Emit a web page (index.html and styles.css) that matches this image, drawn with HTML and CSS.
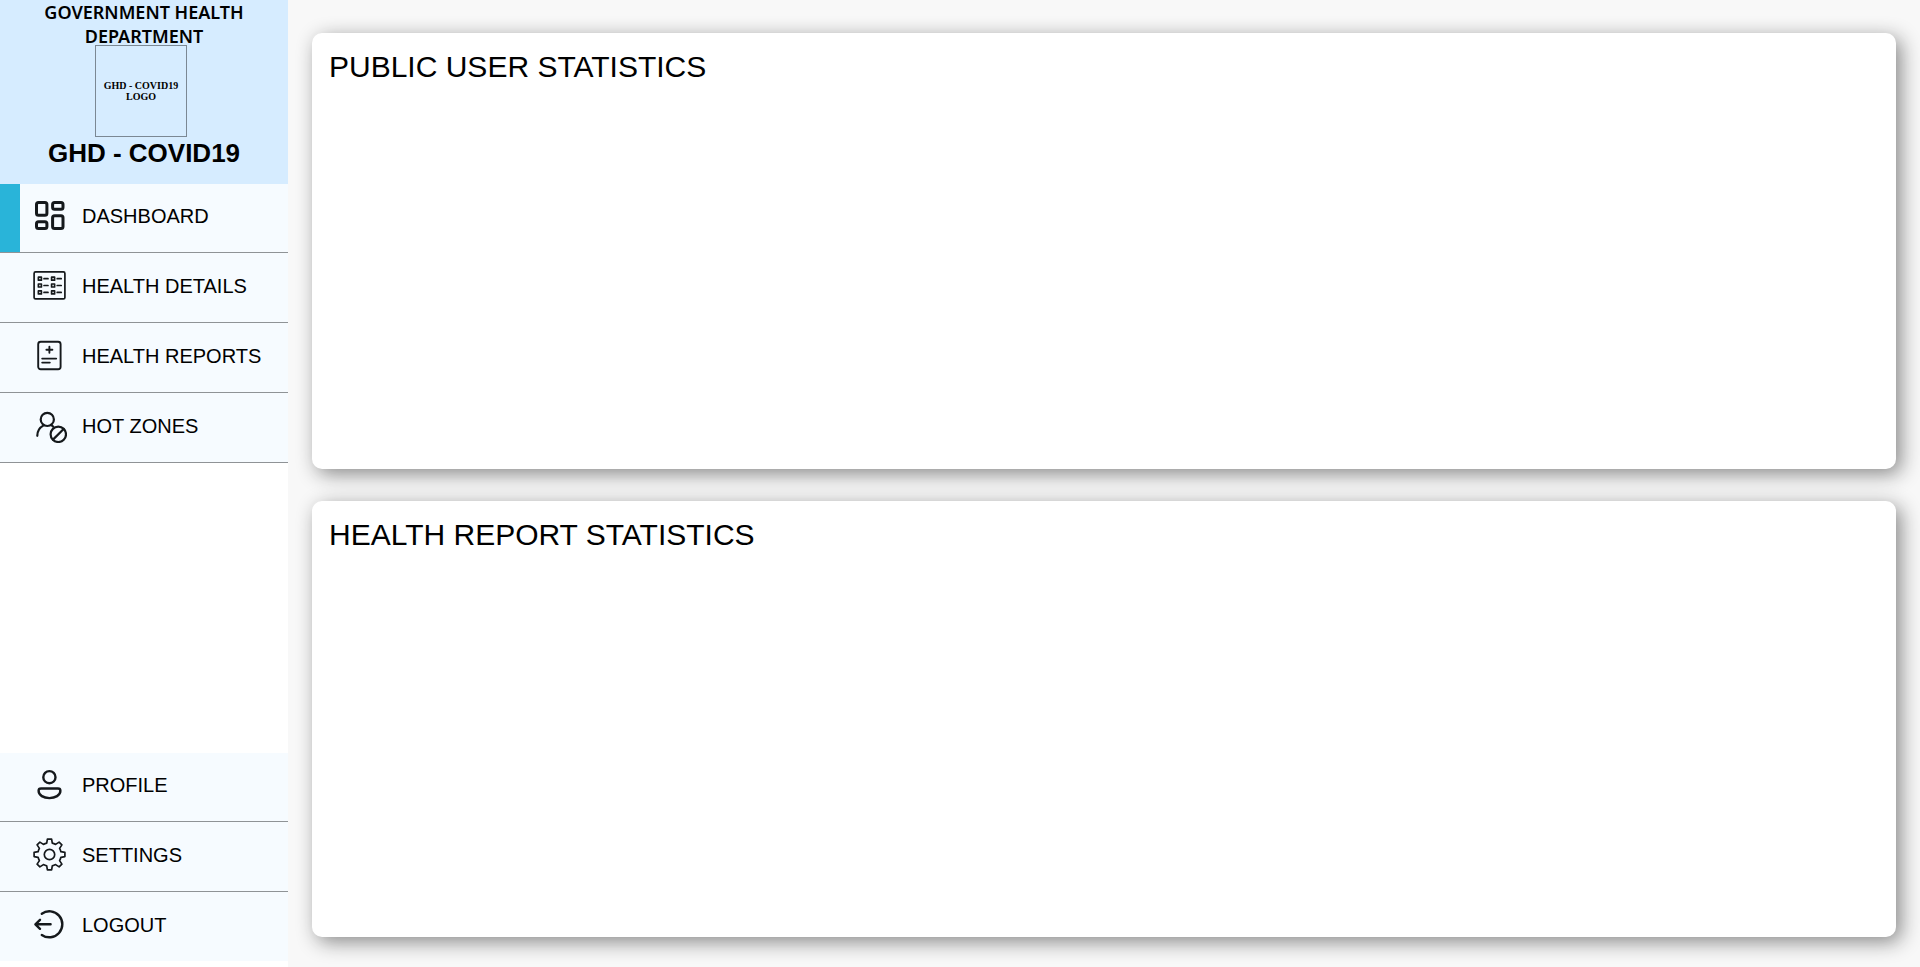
FILE: index.html
```html
<!DOCTYPE html>
<html lang="en">
<head>
<meta charset="utf-8">
<title>GHD - COVID19 Dashboard</title>
<link rel="stylesheet" href="styles.css">
</head>
<body>
<div class="layout">
  <aside class="sidebar">
    <header class="brand">
      <p class="department">GOVERNMENT HEALTH DEPARTMENT</p>
      <div class="logo">GHD - COVID19<br>LOGO</div>
      <h1 class="title">GHD - COVID19</h1>
    </header>
    <nav class="menu">
      <a class="item active" href="#dashboard">
        <svg class="icon" viewBox="0 0 34 34" stroke-width="3"><rect x="3.5" y="3.5" width="10.4" height="12.8" rx="2"/><rect x="19.6" y="3.5" width="10.4" height="6.8" rx="2"/><rect x="3.5" y="22.8" width="10.4" height="6.8" rx="2"/><rect x="19.6" y="16.8" width="10.4" height="12.8" rx="2"/></svg>
        DASHBOARD</a>
      <a class="item" href="#details">
        <svg class="icon" viewBox="0 0 34 34" stroke-width="1.7"><rect x="1.1" y="2.9" width="30.8" height="27" rx="1.5"/><path d="M5.4 8.2h3v3h-3zM18.6 8.2h3v3h-3zM5.4 15h3v3h-3zM18.6 15h3v3h-3zM5.4 21.9h3v3h-3zM18.6 21.9h3v3h-3zM11 9.7h4M24.2 9.7h4M11 16.5h4M24.2 16.5h4M11 23.4h4M24.2 23.4h4"/></svg>
        HEALTH DETAILS</a>
      <a class="item" href="#reports">
        <svg class="icon" viewBox="0 0 34 34" stroke-width="1.9"><rect x="5.2" y="2.7" width="22.4" height="27.6" rx="2.5"/><path d="M16.4 7.8v6M13.4 10.8h6M9.2 19.6h14M9.2 23.6h7.6"/></svg>
        HEALTH REPORTS</a>
      <a class="item" href="#zones">
        <svg class="icon" viewBox="0 0 34 34" stroke-width="2.2"><circle cx="14.3" cy="10.4" r="6.6"/><path d="M4.3 26.8c0-4.6 2.4-8.3 6.3-10.4M18.2 16l2 1.6"/><circle cx="25.3" cy="25.3" r="7.7"/><path d="M20 30.6l10.6-10.6"/></svg>
        HOT ZONES</a>
    </nav>
    <nav class="menu account">
      <a class="item" href="#profile">
        <svg class="icon" viewBox="0 0 34 34" stroke-width="2.4"><circle cx="16.4" cy="9.2" r="6.1"/><path d="M8 20.5h17c1.6 0 2.4.8 2.4 2.2 0 4.6-5.2 7.4-11 7.4S5.6 27.3 5.6 22.7c0-1.4.8-2.2 2.4-2.2z"/></svg>
        PROFILE</a>
      <a class="item" href="#settings">
        <svg class="icon" viewBox="0.5 0.5 34 34" stroke-width="1.7"><circle cx="17" cy="17" r="5.2"/><path d="M14.9 1.6h4.2l.7 4c1.3.3 2.2.7 3.3 1.3l3.5-2.3 2.8 2.8-2.3 3.5c.6 1.1 1 2 1.3 3.3l4 .7v4.2l-4 .7c-.3 1.3-.7 2.2-1.3 3.3l2.3 3.5-2.8 2.8-3.5-2.3c-1.1.6-2 1-3.3 1.3l-.7 4h-4.2l-.7-4c-1.3-.3-2.2-.7-3.3-1.3l-3.5 2.3-2.8-2.8 2.3-3.5c-.6-1.1-1-2-1.3-3.3l-4-.7v-4.2l4-.7c.3-1.3.7-2.2 1.3-3.3L4.6 7.4l2.8-2.8 3.5 2.3c1.1-.6 2-1 3.3-1.3z"/></svg>
        SETTINGS</a>
      <a class="item" href="#logout">
        <svg class="icon" viewBox="0 0 34 34" stroke-width="2.4"><path d="M8.8 5.7A13 13 0 1 1 8.8 26.9M17.6 16.3H2.8M7 11.8l-4.6 4.5L7 20.8"/></svg>
        LOGOUT</a>
    </nav>
  </aside>
  <main class="content">
    <section class="card"><h2 class="heading">PUBLIC USER STATISTICS</h2></section>
    <section class="card"><h2 class="heading">HEALTH REPORT STATISTICS</h2></section>
  </main>
</div>
</body>
</html>
```
FILE: styles.css
```css
* { box-sizing: border-box; }

body {
  margin: 0;
  font-family: "Liberation Sans", Arial, sans-serif;
  color: #000;
}

.layout {
  display: grid;
  grid-template-columns: 15% 1fr;
  min-height: 100vh;
}

.sidebar {
  display: flex;
  flex-direction: column;
  padding-bottom: 6px;
  background: #fff;
}

.brand {
  display: flex;
  flex-direction: column;
  align-items: center;
  height: 184px;
  background: #d6ecff;
  text-align: center;
}

.department {
  width: 240px;
  margin: 0;
  font: 600 18px/24px "Noto Sans", "Open Sans", sans-serif;
}

.logo {
  display: flex;
  align-items: center;
  justify-content: center;
  width: 92px;
  height: 92px;
  margin: -3px 6px 0 0;
  border: 1px solid #7b8894;
  font: bold 10px/11px "Liberation Serif", "Times New Roman", serif;
}

.title {
  margin: 0;
  font-size: 26px;
  line-height: 32px;
}

.menu {
  display: flex;
  flex-direction: column;
  gap: 1px;
  background: #f6fbff;
}

.account { margin-top: auto; }

.item {
  display: flex;
  align-items: center;
  gap: 15px;
  height: 69px;
  padding: 0 0 4px 33px;
  border-bottom: 1px solid #8f9396;
  background: #f6fbff;
  color: inherit;
  font-size: 20px;
  text-decoration: none;
}

.item.active { box-shadow: inset 20px 0 #29b4d9; }

.account .item:last-child {
  height: 68px;
  border-bottom: 0;
}

.icon {
  width: 34px;
  height: 34px;
  fill: none;
  stroke: #15191c;
  stroke-linecap: round;
  stroke-linejoin: round;
}

.content {
  display: grid;
  grid-template-rows: 1fr 1fr;
  gap: 32px;
  padding: 33px 24px 30px;
  background: #f8f8f8;
}

.card {
  padding: 16px 17px;
  border-radius: 10px;
  background: #fff;
  box-shadow: 5px 5px 20px #888;
}

.heading {
  margin: 0;
  font-size: 30px;
  font-weight: 400;
  line-height: 36px;
}
```
